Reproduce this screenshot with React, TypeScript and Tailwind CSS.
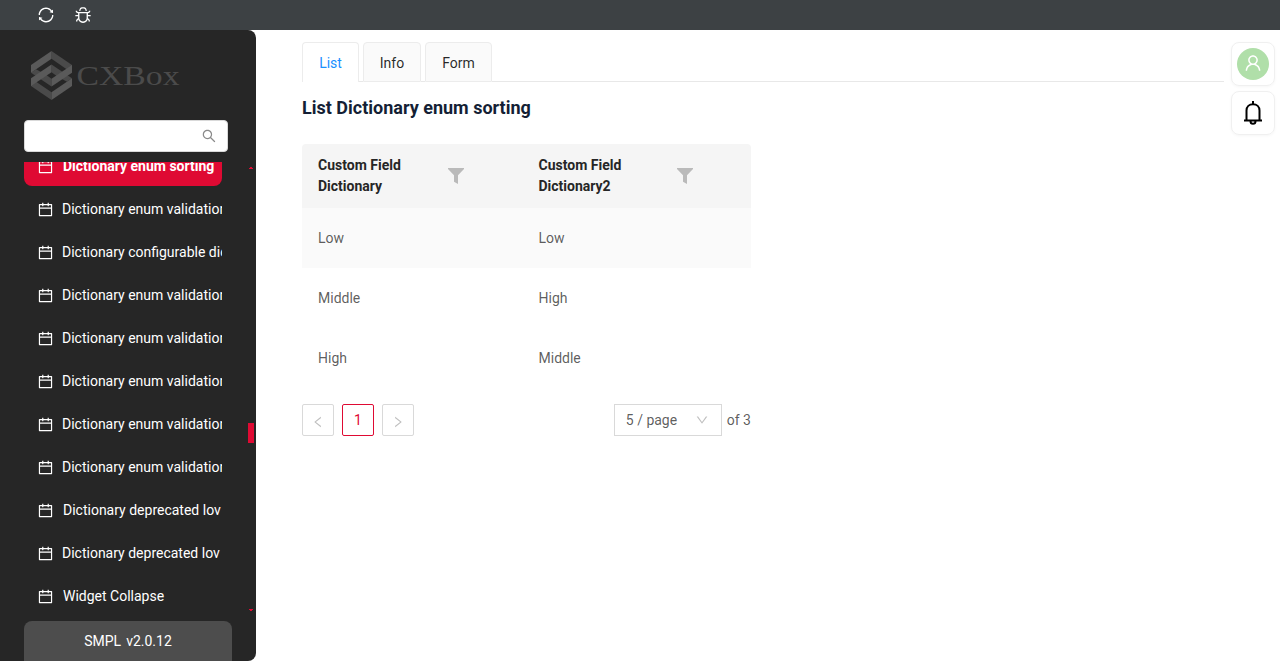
import React from 'react';
import {
  AiOutlineBug,
  AiOutlineCalendar,
  AiOutlineDown,
  AiOutlineLeft,
  AiOutlineRight,
  AiOutlineSearch,
  AiOutlineSync,
  AiOutlineUser,
} from 'react-icons/ai';

const menu: { label: string; shifted?: boolean }[] = [
  { label: 'Dictionary enum validation' },
  { label: 'Dictionary configurable dictionary' },
  { label: 'Dictionary enum validation' },
  { label: 'Dictionary enum validation' },
  { label: 'Dictionary enum validation' },
  { label: 'Dictionary enum validation' },
  { label: 'Dictionary enum validation' },
  { label: 'Dictionary deprecated lov', shifted: true },
  { label: 'Dictionary deprecated lov' },
  { label: 'Widget Collapse', shifted: true },
];

const rows = [
  ['Low', 'Low'],
  ['Middle', 'High'],
  ['High', 'Middle'],
];

function Logo() {
  return (
    <svg width="150" height="50" viewBox="0 0 150 50" className="block">
      <g fill="#4a4a4a">
        <polygon points="20.5,0 41,14 41,21.8 36,18.4 20.5,7.8" />
        <polygon points="0,27.2 0,35 20.5,49 20.5,41.2" />
        <polygon points="20.5,13.4 32,21.2 26,25.2 20.5,21.2" />
        <polygon points="9,27.8 20.5,35.6 20.5,27.8 15,23.8" />
        <polygon points="0,21.8 5,18.2 10.5,21.2 5,25" />
        <polygon points="41,27.2 36,24 30.5,27.8 36,30.8" />
      </g>
      <g fill="#5a5a5a">
        <polygon points="20.5,0 0,14 0,21.8 20.5,7.8" />
        <polygon points="41,14 41,21.8 20.5,35.6 20.5,27.8" />
        <polygon points="20.5,13.4 20.5,21.2 0,35 0,27.2" />
        <polygon points="41,27.2 41,35 20.5,49 20.5,41.2" />
      </g>
      <text x="45.5" y="34" fontSize="27" textLength="103" lengthAdjust="spacingAndGlyphs" fill="#4b4b4b" fontFamily="Liberation Serif, serif">
        CXBox
      </text>
    </svg>
  );
}

function Filter() {
  return (
    <svg width="16" height="16" viewBox="0 0 16 16" fill="#bababa" className="block shrink-0">
      <path d="M0 0H16V1L10 7.3V16L6 13.8V7.3L0 1Z" />
    </svg>
  );
}

function Bell() {
  return (
    <svg width="20" height="24" viewBox="0 0 20 24" fill="none" stroke="#000" strokeWidth="2" className="block">
      <path d="M10 0V3M3.5 19V9.5C3.5 5.8 6.2 3.2 10 3.2S16.5 5.8 16.5 9.5V19M1 19.6H19M7.5 20.3C7.5 22 8.5 22.8 10 22.8S12.5 22 12.5 20.3" />
    </svg>
  );
}

export default function App() {
  return (
    <div className="flex h-[661px] w-[1280px] flex-col overflow-hidden bg-white font-['Roboto',sans-serif] text-sm">
      <header className="flex h-[30px] shrink-0 items-center gap-[19px] bg-[#3d4144] pl-[37px] text-white">
        <AiOutlineSync size={18} />
        <AiOutlineBug size={18} />
      </header>
      <div className="flex min-h-0 flex-1">
        <aside className="flex w-64 shrink-0 flex-col overflow-hidden rounded-r-lg bg-[#262626] text-white">
          <div className="h-[90px] shrink-0 pl-[31px] pt-[20.5px]">
            <Logo />
          </div>
          <div className="ml-6 flex h-8 w-[204px] shrink-0 items-center justify-end rounded-[4px] border border-[#d9d9d9] bg-white pr-[10px]">
            <AiOutlineSearch size={16} color="#8a8a8a" />
          </div>
          <div className="mt-[10px] flex h-[459px] shrink-0 justify-between">
            <nav className="ml-6 flex w-[198px] flex-col justify-end gap-[3px] overflow-hidden pb-[5px]">
              <div className="flex h-10 shrink-0 items-center whitespace-nowrap rounded-lg bg-[#df0a33] pl-[13px] font-bold">
                <AiOutlineCalendar size={17} className="shrink-0" />
                <span className="ml-[9px]">Dictionary enum sorting</span>
              </div>
              {menu.map((item, i) => (
                <div key={i} className="flex h-10 shrink-0 items-center whitespace-nowrap pl-[13px]">
                  <AiOutlineCalendar size={17} className="shrink-0" />
                  <span className={item.shifted ? 'ml-[9px]' : 'ml-2'}>{item.label}</span>
                </div>
              ))}
            </nav>
            <div className="flex w-2 flex-col">
              <div className="mt-[5px] ml-[2px] h-px w-[2px] bg-[#df0a33]" />
              <div className="ml-[1px] h-px w-1 bg-[#df0a33]" />
              <div className="mt-[254px] h-[20px] w-[6px] bg-[#df0a33]" />
              <div className="mt-[166px] ml-[1px] h-px w-1 bg-[#df0a33]" />
              <div className="ml-[2px] h-px w-[2px] bg-[#df0a33]" />
            </div>
          </div>
          <div className="ml-6 flex h-10 w-[208px] shrink-0 items-center justify-center gap-[5px] rounded-t-lg bg-[#4d4d4d]">
            <span>SMPL</span>
            <span>v2.0.12</span>
          </div>
        </aside>

        <main className="w-[968px] shrink-0 pl-[46px] pt-3">
          <div className="flex h-10 items-stretch text-[rgba(0,0,0,0.85)]">
            <div className="flex w-[57px] items-center justify-center rounded-t border border-b-0 border-[#ececec] bg-white pt-px text-[#1890ff]">List</div>
            <div className="w-1 border-b border-[#e8e8e8]" />
            <div className="flex w-[58px] items-center justify-center rounded-t border border-[#ececec] bg-[#fafafa] pt-px">Info</div>
            <div className="w-1 border-b border-[#e8e8e8]" />
            <div className="flex w-[67px] items-center justify-center rounded-t border border-[#ececec] bg-[#fafafa] pt-px">Form</div>
            <div className="flex-1 border-b border-[#e8e8e8]" />
          </div>
          <h1 className="mt-[12px] text-lg leading-7 font-bold text-[#141f35]">List Dictionary enum sorting</h1>
          <section className="mt-[22px] w-[449px] text-[rgba(0,0,0,0.65)]">
            <div className="flex h-16 items-center rounded-t bg-[#f5f5f5] font-bold leading-[21px] text-[#262626]">
              <div className="flex w-[220.5px] items-center pl-4">
                <span className="w-[130px]">Custom Field<br />Dictionary</span>
                <Filter />
              </div>
              <div className="flex items-center pl-4">
                <span className="w-[138.5px]">Custom Field<br />Dictionary2</span>
                <Filter />
              </div>
            </div>
            {rows.map((row, i) => (
              <div key={i} className={i === 0 ? 'flex h-[60px] items-center bg-[#fafafa]' : 'flex h-[60px] items-center'}>
                <div className="w-[220.5px] pl-4">{row[0]}</div>
                <div className="pl-4">{row[1]}</div>
              </div>
            ))}
            <footer className="mt-4 flex h-8 items-center">
              <button className="mr-2 flex size-8 items-center justify-center rounded-[2px] border border-[#d9d9d9] pt-[3px] text-[#bfbfbf]">
                <AiOutlineLeft size={14} />
              </button>
              <button className="mr-2 flex size-8 items-center justify-center rounded-[2px] border border-[#df0a33] text-[#df0a33]">1</button>
              <button className="flex size-8 items-center justify-center rounded-[2px] border border-[#d9d9d9] pt-[3px] text-[#bfbfbf]">
                <AiOutlineRight size={14} />
              </button>
              <div className="ml-auto flex h-8 w-[108px] items-center justify-between border border-[#d9d9d9] pr-[12px] pl-[11px]">
                5 / page
                <AiOutlineDown size={14} color="#bfbfbf" />
              </div>
              <span className="ml-[5px]">of 3</span>
            </footer>
          </section>
        </main>

        <div className="flex flex-col gap-[5px] pt-3 pl-[7px]">
          <div className="flex size-11 items-center justify-center rounded-lg border border-[#f0f0f0] shadow-[0_1px_3px_rgba(0,0,0,0.04)]">
            <div className="flex size-8 items-center justify-center rounded-full bg-[#b0dfa9] text-white">
              <AiOutlineUser size={20} className="-mt-[2px]" />
            </div>
          </div>
          <div className="flex size-11 items-center justify-center rounded-lg border border-[#f0f0f0] shadow-[0_1px_3px_rgba(0,0,0,0.04)]">
            <Bell />
          </div>
        </div>
      </div>
    </div>
  );
}
